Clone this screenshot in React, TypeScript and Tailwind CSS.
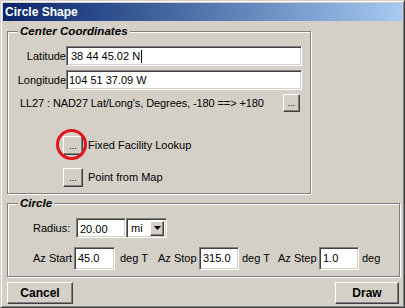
import React from "react";

const sunken =
    "border border-t-[#808080] border-l-[#808080] border-r-white border-b-white shadow-[inset_1px_1px_0_#404040,inset_-1px_-1px_0_#d4d0c8] bg-white";
const raised =
    "border border-t-white border-l-white border-r-[#404040] border-b-[#404040] shadow-[inset_-1px_-1px_0_#808080] bg-[#d4d0c8]";
const etched = "relative border border-[#808080] shadow-[inset_1px_1px_0_#fff,1px_1px_0_#fff]";

function GroupBox({ title, className, children }: { title: string; className: string; children: React.ReactNode }) {
    return (
        <div className={`${etched} ${className}`}>
            <span className="absolute left-[10px] -top-[8px] bg-[#d4d0c8] px-[2px] text-[11.6px] font-bold italic leading-[14px]">
                {title}
            </span>
            {children}
        </div>
    );
}

function DotsButton({ className }: { className: string }) {
    return (
        <button type="button" className={`${raised} ${className} flex items-end justify-center pb-[3px] text-[9px] leading-none`}>
            ...
        </button>
    );
}

export default function App() {
    return (
        <div className="w-[405px] h-[308px] bg-[#d4d0c8] border border-t-[#d4d0c8] border-l-[#d4d0c8] border-r-[#404040] border-b-[#404040] shadow-[inset_1px_1px_0_#fff,inset_-1px_-1px_0_#808080] p-[2px] flex flex-col font-['Liberation_Sans',Arial,sans-serif] text-[11px] text-black">
            <div className="h-[18px] bg-linear-to-r from-[#0a246a] to-[#a6caf0] flex items-center pl-[2px]">
                <span className="text-white font-bold text-[12px]">Circle Shape</span>
            </div>

            <GroupBox title="Center Coordinates" className="mt-[10px] ml-[4px] w-[304px] h-[163px] pt-[14px]">
                <div className="flex items-center">
                    <span className="w-[58px] text-right">Latitude</span>
                    <div className={`${sunken} w-[236px] h-[20px] flex items-center pl-[4px]`}>
                        <span>38 44 45.02 N</span>
                        <span className="w-[1px] h-[13px] bg-black ml-[1px]" />
                    </div>
                </div>
                <div className="flex items-center mt-[4px]">
                    <span className="w-[58px] text-right">Longitude</span>
                    <div className={`${sunken} w-[236px] h-[20px] flex items-center pl-[2px]`}>
                        <span>104 51 37.09 W</span>
                    </div>
                </div>
                <div className="flex items-center justify-between mt-[4px] pl-[12px] pr-[10px]">
                    <span className="tracking-[-0.1px]">LL27 : NAD27 Lat/Long's, Degrees, -180 ==&gt; +180</span>
                    <DotsButton className="w-[17px] h-[18px]" />
                </div>
                <div className="flex items-center mt-[24px] pl-[55px] gap-[5px]">
                    <div className="relative">
                        <DotsButton className="w-[20px] h-[19px]" />
                        <span className="absolute -left-[7px] -top-[7px] w-[31px] h-[31px] rounded-full border-[3px] border-[#e0141e]" />
                    </div>
                    <span>Fixed Facility Lookup</span>
                </div>
                <div className="flex items-center mt-[13px] pl-[55px] gap-[5px]">
                    <DotsButton className="w-[20px] h-[19px]" />
                    <span>Point from Map</span>
                </div>
            </GroupBox>

            <GroupBox title="Circle" className="mt-[9px] ml-[4px] w-[393px] h-[74px] pt-[14px]">
                <div className="flex items-center pl-[25px]">
                    <span className="w-[43px]">Radius:</span>
                    <div className={`${sunken} w-[50px] h-[20px] flex items-start pl-[3px] pt-[2px]`}>20.00</div>
                    <div className={`${sunken} w-[41px] h-[20px] flex items-center justify-between pl-[4px] pr-[2px]`}>
                        <span>mi</span>
                        <span className={`${raised} w-[14px] h-[15px] flex items-center justify-center`}>
                            <svg width="7" height="4" viewBox="0 0 7 4">
                                <path d="M0 0h7L3.5 4z" fill="#000" />
                            </svg>
                        </span>
                    </div>
                </div>
                <div className="flex items-center pl-[25px] mt-[9px]">
                    <span className="w-[41px]">Az Start</span>
                    <div className={`${sunken} w-[41px] h-[23px] pl-[3px] pt-[2px]`}>45.0</div>
                    <span className="w-[38px] ml-[5px]">deg T</span>
                    <span className="w-[41px]">Az Stop</span>
                    <div className={`${sunken} w-[40px] h-[23px] pl-[3px] pt-[2px]`}>315.0</div>
                    <span className="w-[36px] ml-[3px]">deg T</span>
                    <span className="w-[41px]">Az Step</span>
                    <div className={`${sunken} w-[40px] h-[23px] pl-[3px] pt-[2px]`}>1.0</div>
                    <span className="ml-[3px]">deg</span>
                </div>
            </GroupBox>

            <div className="flex justify-between mt-[5px] ml-[4px] mr-[3px]">
                <button type="button" className={`${raised} w-[66px] h-[22px] font-bold text-[12px]`}>
                    Cancel
                </button>
                <button type="button" className={`${raised} w-[64px] h-[22px] font-bold text-[12px]`}>
                    Draw
                </button>
            </div>
        </div>
    );
}
